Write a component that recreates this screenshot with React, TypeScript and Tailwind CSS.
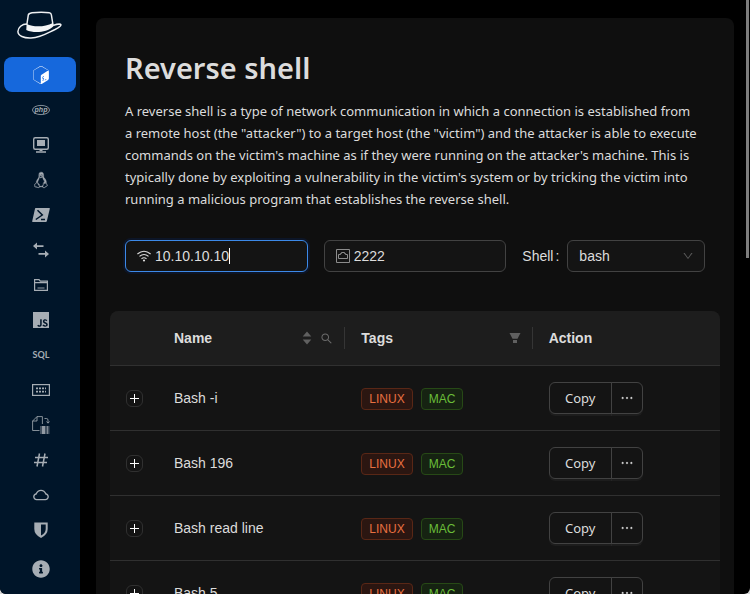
import React from "react";
import {
  AiOutlineCloud,
  AiOutlineDown,
  AiOutlineEllipsis,
  AiOutlineLinux,
  AiOutlineSearch,
} from "react-icons/ai";
import { FaInfoCircle } from "react-icons/fa";
import { SiGnubash, SiJavascript } from "react-icons/si";

function HatLogo() {
  return (
    <svg viewBox="0 0 46 28" className="h-7 w-[46px]" fill="none" aria-hidden="true">
      <path
        d="M9.800 13C5 13 1 16.500 .9 20.500C1 25 7 27.300 14 27C25 26.400 32 21 38 18.500C41 17 44.300 15 43.900 13.600C43.500 12.800 39 13.500 36 14.500"
        stroke="#eef0f2"
        strokeWidth="1.500"
      />
      <path
        d="M9.800 14L11.300 4C11.600 2.300 13 2 15 1.700C21 1 28 1 32.500 1.800C33.800 2 34.200 2.500 34.400 4L36 14"
        stroke="#eef0f2"
        strokeWidth="1.500"
      />
      <path
        d="M9.600 13C17 16.500 28 16 35.800 12L36.200 15.500C30 21.500 17 22.500 9.300 19Z"
        fill="#f4f5f6"
      />
    </svg>
  );
}

function PhpIcon() {
  return (
    <svg viewBox="0 0 18 18" className="size-[18px]" aria-hidden="true">
      <ellipse cx="9" cy="9" rx="8.500" ry="4.600" fill="none" stroke="currentColor" strokeWidth=".8" />
      <text
        x="9"
        y="11"
        textAnchor="middle"
        fontSize="7"
        fontWeight="700"
        fontStyle="italic"
        fontFamily="Liberation Sans, sans-serif"
        fill="currentColor"
      >
        php
      </text>
    </svg>
  );
}

function MonitorIcon() {
  return (
    <svg viewBox="0 0 18 18" className="size-[18px]" aria-hidden="true">
      <rect x="1.700" y="1.700" width="14.600" height="11.600" rx="1.500" fill="none" stroke="currentColor" strokeWidth="1.400" />
      <path d="M5 4h8v6H5zM7.500 13.500h3v1.500h-3zM4 15.200h10v1.600H4z" fill="currentColor" />
    </svg>
  );
}

function PowershellIcon() {
  return (
    <svg viewBox="0 0 18 18" className="size-[18px]" aria-hidden="true">
      <path d="M3.700 2H17.300q.7 0 .5.700L14.800 15.300q-.2.700-1 .7H.7q-.7 0-.5-.7L3 2.700q.1-.7.700-.7z" fill="currentColor" />
      <path d="M5.500 4.300L10.300 9L3.800 13.500M9 13.400h4" fill="none" stroke="#001529" strokeWidth="1.500" />
    </svg>
  );
}

function TransferIcon() {
  return (
    <svg viewBox="0 0 18 18" className="size-[18px]" fill="currentColor" aria-hidden="true">
      <path d="M1 5l4-3.500V4.200h6.500v1.700H5v2.700zM17 13l-4-3.500v2.600H6.500v1.700H13v2.800z" />
    </svg>
  );
}

function FolderIcon() {
  return (
    <svg viewBox="0 0 18 18" className="size-[18px]" fill="none" stroke="currentColor" aria-hidden="true">
      <path d="M2.600 3.600H7l1.300 1.600h7.100v9.200H2.600zM2.600 6.600h12.800" strokeWidth="1.200" />
      <path d="M5.500 12h7" strokeWidth="1.300" opacity=".7" />
    </svg>
  );
}

function SqlIcon() {
  return (
    <span className="font-['Lato',sans-serif] text-[9px] font-bold leading-[18px]">SQL</span>
  );
}

function EncodeIcon() {
  return (
    <svg viewBox="0 0 18 18" className="size-[18px]" aria-hidden="true">
      <rect x=".6" y="3.600" width="16.800" height="10.800" fill="none" stroke="currentColor" strokeWidth="1.200" />
      <path
        d="M4 6.500h2v1.800H4zM7 6.500h2v1.800H7zM10 6.500h2v1.800h-2zM13 6.500h1v1.800h-1zM4 9.700h2v1.800H4zM7 9.700h2v1.800H7zM10 9.700h2v1.800h-2zM13 9.700h1v1.800h-1z"
        fill="currentColor"
      />
    </svg>
  );
}

function FileBinaryIcon() {
  return (
    <svg viewBox="0 0 18 18" className="size-[18px]" fill="none" stroke="currentColor" aria-hidden="true">
      <path d="M7.500 14.500H.6V5L5 .6h5.400V8M5 .6V5H.6" strokeWidth=".8" />
      <path d="M12.500 2.500h2q1.500 0 1.500 1.500v3M14.500 5.500L16 7.200l1.500-1.700" strokeWidth=".8" />
      <path d="M8 14h9.500" strokeWidth="8" opacity=".4" />
      <path d="M11.500 10v8" strokeWidth="3" opacity=".8" />
      <path d="M15.500 10v8" opacity=".6" />
    </svg>
  );
}

function HashIcon() {
  return (
    <svg viewBox="0 0 18 18" className="size-[18px]" fill="none" stroke="currentColor" strokeWidth="1.500" aria-hidden="true">
      <path d="M7.500 2.500L5 15.500M13 2.500L10.500 15.500M3 6.500h13M2 11.500h13" />
    </svg>
  );
}

function ShieldIcon() {
  return (
    <svg viewBox="0 0 18 18" className="size-[18px]" aria-hidden="true">
      <path d="M2.300 1.500h13.400V8q0 5.500-6.700 9Q2.300 13.500 2.300 8z" fill="currentColor" />
      <path d="M9 3.500h4.700V8q0 4-4.700 6.600z" fill="#001529" />
    </svg>
  );
}

function WifiIcon() {
  return (
    <svg viewBox="0 0 14 14" className="size-3.5 shrink-0" fill="none" stroke="currentColor" strokeWidth="1.100" aria-hidden="true">
      <path d="M.4 5Q7-.6 13.600 5M2.500 7.400Q7 3.700 11.500 7.400M4.500 9.700Q7 7.700 9.500 9.700" />
      <circle cx="7" cy="11.500" r="1.100" fill="currentColor" stroke="none" />
    </svg>
  );
}

function PortIcon() {
  return (
    <svg viewBox="0 0 14 14" className="size-3.5 shrink-0 text-[#8c8c8c]" fill="none" stroke="currentColor" aria-hidden="true">
      <path d="M.5.5h13v13H.5z" />
      <path d="M2.500 9.500V5.500h2V4.500h1V3.500h3v1h1v1h2v4z" />
    </svg>
  );
}

const tools = [
  { label: "Reverse shell", icon: <SiGnubash className="size-[18px]" /> },
  { label: "PHP reverse shell", icon: <PhpIcon /> },
  { label: "TTY spawn shell", icon: <MonitorIcon /> },
  { label: "Linux commands", icon: <AiOutlineLinux className="size-[18px]" stroke="currentColor" strokeWidth={20} /> },
  { label: "PowerShell commands", icon: <PowershellIcon /> },
  { label: "File transfer", icon: <TransferIcon /> },
  { label: "File inclusion", icon: <FolderIcon /> },
  { label: "Cross-site scripting", icon: <SiJavascript className="size-4" /> },
  { label: "SQL injection", icon: <SqlIcon /> },
  { label: "Data encoding", icon: <EncodeIcon /> },
  { label: "Obfuscated files", icon: <FileBinaryIcon /> },
  { label: "Hash encoding", icon: <HashIcon /> },
  { label: "Feed", icon: <AiOutlineCloud className="size-[18px]" /> },
  { label: "Header security", icon: <ShieldIcon /> },
];

function Sidebar() {
  return (
    <nav className="flex w-20 shrink-0 flex-col bg-[#001529] px-1 text-[#a6adb4]">
      <div className="flex h-[57px] shrink-0 justify-center pt-[11px] pb-[18px]">
        <HatLogo />
      </div>
      {tools.map((tool, i) => (
        <a
          key={tool.label}
          href="#"
          aria-label={tool.label}
          className={
            i === 0
              ? "flex h-[35px] shrink-0 items-center justify-center rounded-lg bg-[#1668dc] pl-0.5 text-white"
              : "flex h-[35px] shrink-0 items-center justify-center rounded-lg pl-0.5"
          }
        >
          {tool.icon}
        </a>
      ))}
      <a href="#" aria-label="About" className="mt-1 flex h-[35px] shrink-0 items-center justify-center pl-0.5">
        <FaInfoCircle className="size-[18px]" />
      </a>
    </nav>
  );
}

function ConnectionForm() {
  return (
    <form className="mt-[30px] grid grid-cols-3 gap-4 px-[15px] text-[14px]">
      <label className="flex h-8 min-w-0 items-center rounded-md border border-[#3c89e8] bg-[#141414] px-[11px] shadow-[0_0_0_2px_rgba(0,60,180,0.15)]">
        <WifiIcon />
        <input
          aria-label="IP address"
          defaultValue="10.10.10.10"
          className="ml-1 min-w-0 bg-transparent caret-transparent outline-none [field-sizing:content]"
        />
        <span className="h-4 w-px shrink-0 bg-white" />
      </label>
      <label className="flex h-8 min-w-0 items-center rounded-md border border-[#424242] bg-[#141414] px-[11px]">
        <PortIcon />
        <input
          aria-label="Port"
          defaultValue="2222"
          className="ml-1 w-full min-w-0 bg-transparent outline-none"
        />
      </label>
      <div className="flex h-8 items-center">
        <label htmlFor="shell" className="mr-2">
          Shell<span className="ml-0.5">:</span>
        </label>
        <div className="relative flex-1">
          <select
            id="shell"
            className="h-8 w-full appearance-none rounded-md border border-[#424242] bg-[#141414] px-[11px] outline-none"
          >
            <option>bash</option>
            <option>sh</option>
          </select>
          <AiOutlineDown className="pointer-events-none absolute top-2.5 right-[11px] size-3 text-[#5a5a5a]" />
        </div>
      </div>
    </form>
  );
}

const payloads = ["Bash -i", "Bash 196", "Bash read line", "Bash 5", "Bash udp"];

function PayloadTable() {
  return (
    <table className="mt-[39px] w-full table-fixed border-separate border-spacing-0 overflow-hidden rounded-t-lg bg-[#141414] text-left text-[14px]">
      <colgroup>
        <col className="w-12" />
        <col />
        <col />
        <col />
      </colgroup>
      <thead className="bg-[#1d1d1d]">
        <tr className="h-[55px]">
          <th className="border-b border-[#303030]" aria-label="Expand" />
          <th className="border-b border-[#303030] p-0">
            <div className="flex h-[22px] items-center border-r border-[#353535] pr-[11px] pl-4">
              <span className="flex-1">Name</span>
              <button type="button" aria-label="Sort by name" className="text-[#606060]">
                <svg viewBox="0 0 10 14" className="h-3.5 w-2.5" fill="currentColor">
                  <path d="M5 .5L9.300 5.500H.7zM5 13.500L9.300 8.500H.7z" />
                </svg>
              </button>
              <button type="button" aria-label="Search names" className="ml-2 text-[#6b6b6b]">
                <AiOutlineSearch className="size-[13px]" />
              </button>
            </div>
          </th>
          <th className="border-b border-[#303030] p-0">
            <div className="flex h-[22px] items-center border-r border-[#353535] pr-[11px] pl-4">
              <span className="flex-1">Tags</span>
              <button type="button" aria-label="Filter tags" className="text-[#606060]">
                <svg viewBox="0 0 12 12" className="size-3" fill="currentColor">
                  <path d="M.5 1h11L8.500 6.800h-5zM4 8h4v3H4z" />
                </svg>
              </button>
            </div>
          </th>
          <th className="border-b border-[#303030] px-4">Action</th>
        </tr>
      </thead>
      <tbody>
        {payloads.map((name) => (
          <tr key={name} className="h-[65px]">
            <td className="border-b border-[#303030] px-4">
              <button
                type="button"
                aria-label={"Expand " + name}
                className="mt-px flex size-[17px] items-center justify-center rounded-md border border-[#303030]"
              >
                <svg viewBox="0 0 9 9" className="size-[9px]" stroke="#fff" fill="none">
                  <path d="M0 4.500h9M4.500 0v9" />
                </svg>
              </button>
            </td>
            <td className="border-b border-[#303030] px-4">{name}</td>
            <td className="border-b border-[#303030] px-4">
              <div className="flex gap-2 pt-px text-[12px] leading-5">
                <span className="rounded border border-[#592716] bg-[#2b1611] px-[7px] text-[#e87040]">LINUX</span>
                <span className="rounded border border-[#274916] bg-[#162312] px-[7px] text-[#6abe39]">MAC</span>
              </div>
            </td>
            <td className="border-b border-[#303030] px-4">
              <div className="flex">
                <button
                  type="button"
                  className="h-8 w-[63px] rounded-l-md border border-[#424242] pt-px font-['Noto_Sans',sans-serif] text-[13px] shadow-[0_2px_0_rgba(255,255,255,0.04)]"
                >
                  Copy
                </button>
                <button
                  type="button"
                  aria-label={"More actions for " + name}
                  className="-ml-px flex h-8 w-8 items-center justify-center rounded-r-md border border-[#424242] shadow-[0_2px_0_rgba(255,255,255,0.04)]"
                >
                  <AiOutlineEllipsis className="size-4" stroke="currentColor" strokeWidth={20} />
                </button>
              </div>
            </td>
          </tr>
        ))}
      </tbody>
    </table>
  );
}

export default function App() {
  return (
    <div className="h-screen bg-[#d8d8d8]">
      <div className="relative flex h-full overflow-hidden rounded-b-md bg-black font-['Liberation_Sans',Arial,sans-serif] text-[#dcdcdc]">
        <Sidebar />
        <main className="min-w-0 flex-1 px-4 pt-[18px]">
          <section className="rounded-lg bg-[#0f0f0f] px-3.5 pt-[31px]">
            <div className="px-[15px] font-['Noto_Sans',sans-serif]">
              <h1 className="text-[29px] leading-[38px] font-semibold">Reverse shell</h1>
              <p className="mt-[13px] text-[13px] leading-[22px]">
                A reverse shell is a type of network communication in which a connection is established from
                <br />
                a remote host (the "attacker") to a target host (the "victim") and the attacker is able to execute
                commands on the victim's machine as if they were running on the attacker's machine. This is
                typically done by exploiting a vulnerability in the victim's system or by tricking the victim
                into running a malicious program that establishes the reverse shell.
              </p>
            </div>
            <ConnectionForm />
            <PayloadTable />
          </section>
        </main>
        <div className="absolute top-0 right-px h-[258px] w-[3px] bg-[#7d7d7d]" />
      </div>
    </div>
  );
}
